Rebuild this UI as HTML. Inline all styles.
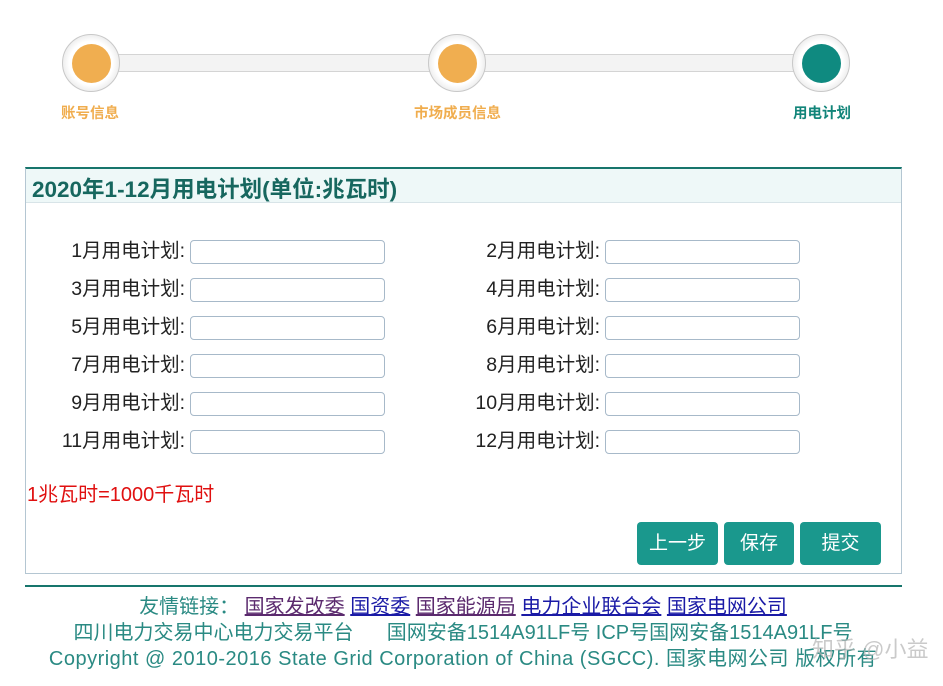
<!DOCTYPE html>
<html><head><meta charset="utf-8"><style>
*{margin:0;padding:0;box-sizing:border-box}
body{width:943px;height:686px;background:#fff;position:relative;overflow:hidden;font-family:"Liberation Sans","Noto Sans CJK SC",sans-serif}
.abs{position:absolute}
.bar{left:91px;top:54px;width:730px;height:18px;background:#f3f3f3;border-top:1px solid #d4d4d4;border-bottom:1px solid #d4d4d4}
.outer{width:58px;height:58px;border-radius:50%;background:radial-gradient(circle,#fff 55%,#d0d0d0 100%);border:1px solid #c8c8c8}
.inner{position:absolute;left:9px;top:9px;width:39px;height:39px;border-radius:50%}
.lab{font-size:14.5px;font-weight:bold;color:#f0ad4e;top:102px}
.row{position:absolute;font-size:19.5px;color:#222;height:23px;line-height:23px}
.row span{position:absolute;right:0;white-space:nowrap}
.inp{position:absolute;width:195px;height:24px;border:1px solid #a7b9c9;border-radius:4px;background:#fff}
.btn{position:absolute;top:522px;height:43px;background:#1a988d;border-radius:4px;color:#fff;font-size:19px;line-height:43px;text-align:center}
.ft{position:absolute;left:0;width:926px;text-align:center;font-size:20px;color:#2a8a83;white-space:nowrap}
.ft a{text-decoration:underline}
</style></head><body>
<div class="abs bar"></div>
<div class="abs outer" style="left:62px;top:34px"><div class="inner" style="background:#f0ae50"></div></div>
<div class="abs outer" style="left:428px;top:34px"><div class="inner" style="background:#f0ae50"></div></div>
<div class="abs outer" style="left:792px;top:34px"><div class="inner" style="background:#0f8a80"></div></div>
<div class="abs lab" style="left:61px">账号信息</div>
<div class="abs lab" style="left:414px">市场成员信息</div>
<div class="abs lab" style="left:793px;color:#12857a">用电计划</div>

<div class="abs" style="left:25px;top:167px;width:877px;height:407px;border:1px solid #b4c6d2;border-top:2px solid #17756c"></div>
<div class="abs" style="left:26px;top:169px;width:875px;height:34px;background:#eef8f8;border-bottom:1px solid #d8e4e8"></div>
<div class="abs" style="left:32px;top:172px;font-size:22.5px;font-weight:bold;color:#17675f">2020年1-12月用电计划(单位:兆瓦时)</div>

<div class="row" style="left:0;top:240px;width:185px"><span>1月用电计划:</span></div><div class="inp" style="left:190px;top:240px"></div>
<div class="row" style="left:0;top:240px;width:600px"><span>2月用电计划:</span></div><div class="inp" style="left:605px;top:240px"></div>
<div class="row" style="left:0;top:278px;width:185px"><span>3月用电计划:</span></div><div class="inp" style="left:190px;top:278px"></div>
<div class="row" style="left:0;top:278px;width:600px"><span>4月用电计划:</span></div><div class="inp" style="left:605px;top:278px"></div>
<div class="row" style="left:0;top:316px;width:185px"><span>5月用电计划:</span></div><div class="inp" style="left:190px;top:316px"></div>
<div class="row" style="left:0;top:316px;width:600px"><span>6月用电计划:</span></div><div class="inp" style="left:605px;top:316px"></div>
<div class="row" style="left:0;top:354px;width:185px"><span>7月用电计划:</span></div><div class="inp" style="left:190px;top:354px"></div>
<div class="row" style="left:0;top:354px;width:600px"><span>8月用电计划:</span></div><div class="inp" style="left:605px;top:354px"></div>
<div class="row" style="left:0;top:392px;width:185px"><span>9月用电计划:</span></div><div class="inp" style="left:190px;top:392px"></div>
<div class="row" style="left:0;top:392px;width:600px"><span>10月用电计划:</span></div><div class="inp" style="left:605px;top:392px"></div>
<div class="row" style="left:0;top:430px;width:185px"><span>11月用电计划:</span></div><div class="inp" style="left:190px;top:430px"></div>
<div class="row" style="left:0;top:430px;width:600px"><span>12月用电计划:</span></div><div class="inp" style="left:605px;top:430px"></div>

<div class="abs" style="left:27px;top:478px;font-size:20px;color:#e01010">1兆瓦时=1000千瓦时</div>

<div class="btn" style="left:637px;width:81px">上一步</div>
<div class="btn" style="left:724px;width:70px">保存</div>
<div class="btn" style="left:800px;width:81px">提交</div>

<div class="abs" style="left:25px;top:585px;width:877px;height:2px;background:#17756c"></div>
<div class="ft" style="top:590px">友情链接： <a style="color:#5b2a6e">国家发改委</a> <a style="color:#1a1aa6">国资委</a> <a style="color:#5b2a6e">国家能源局</a> <a style="color:#1a1aa6">电力企业联合会</a> <a style="color:#1a1aa6">国家电网公司</a></div>
<div class="ft" style="top:616px">四川电力交易中心电力交易平台 &nbsp;&nbsp;&nbsp;&nbsp; 国网安备1514A91LF号 ICP号国网安备1514A91LF号</div>
<div class="ft" style="top:642px;letter-spacing:0.5px">Copyright @ 2010-2016 State Grid Corporation of China (SGCC). 国家电网公司 版权所有</div>
<div class="abs" style="left:812px;top:632px;font-size:22px;color:rgba(180,180,180,0.7)">知乎 @小益</div>
</body></html>
